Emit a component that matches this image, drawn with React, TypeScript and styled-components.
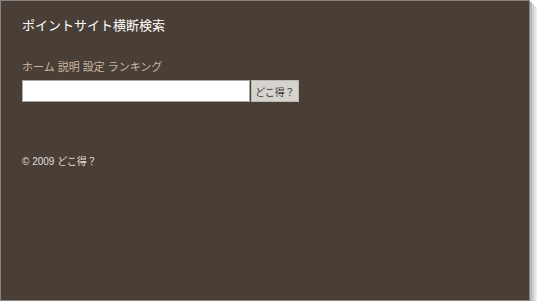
import React from "react";
import styled, { createGlobalStyle } from "styled-components";

const Global = createGlobalStyle`
  html, body { margin: 0; padding: 0; background: #ffffff; }
  body { font-family: "Liberation Sans", "Noto Sans CJK JP", sans-serif; }
`;

const Frame = styled.div`
  box-sizing: border-box;
  width: 530px;
  height: 301px;
  background: #4a3f36;
  border: 1px solid #8a8580;
  box-shadow: 2px 2px 0 #b8b8b8, 4px 4px 0 #d0d0d0, 6px 6px 0 #e4e4e4, 7px 7px 0 #f2f2f2;
  padding: 15px 21px 0 21px;
  display: flex;
  flex-direction: column;
`;

const Title = styled.h1`
  margin: 0;
  font-size: 13px;
  line-height: 20px;
  font-weight: normal;
  color: #ffffff;
  font-family: "Liberation Sans", "Noto Sans CJK JP", sans-serif;
`;

const Nav = styled.nav`
  margin-top: 23px;
  display: flex;
  gap: 3px;
  font-size: 11px;
  line-height: 16px;
`;

const NavLink = styled.a`
  color: #c9b6a2;
  text-decoration: none;
`;

const SearchRow = styled.form`
  margin: 5px 0 0;
  display: flex;
  align-items: stretch;
  height: 22px;
`;

const Input = styled.input`
  box-sizing: border-box;
  width: 228px;
  height: 22px;
  border: 1px solid #a8a8a8;
  background: #ffffff;
  margin: 0;
  padding: 0 3px;
  outline: none;
`;

const Button = styled.button`
  box-sizing: border-box;
  width: 48px;
  height: 22px;
  margin: 0 0 0 1px;
  padding: 0;
  background: #d6d3ce;
  border: 1px solid #bdb9b3;
  color: #3a3a3a;
  font-size: 10px;
  font-family: "Liberation Sans", "Noto Sans CJK JP", sans-serif;
`;

const Footer = styled.p`
  margin: 52px 0 0;
  font-size: 10px;
  line-height: 16px;
  color: #e0dcd8;
`;

export default function App() {
  return (
    <>
      <Global />
      <Frame>
        <Title>ポイントサイト横断検索</Title>
        <Nav>
          <NavLink href="#">ホーム</NavLink>
          <NavLink href="#">説明</NavLink>
          <NavLink href="#">設定</NavLink>
          <NavLink href="#">ランキング</NavLink>
        </Nav>
        <SearchRow onSubmit={(e) => e.preventDefault()}>
          <Input type="text" />
          <Button type="submit">どこ得？</Button>
        </SearchRow>
        <Footer>© 2009 どこ得？</Footer>
      </Frame>
    </>
  );
}
